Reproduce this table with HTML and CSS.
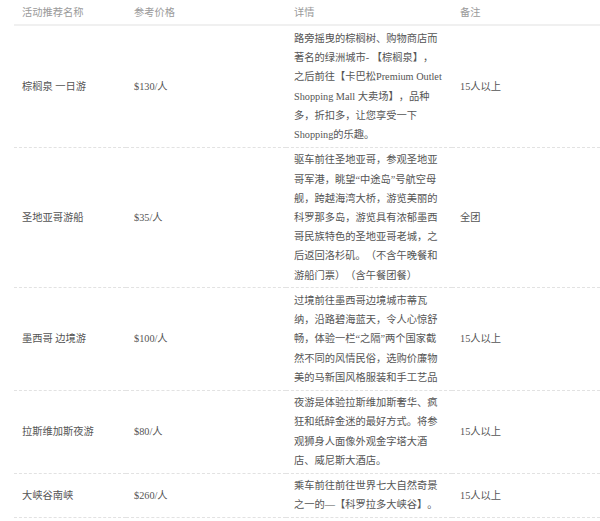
FILE: index.html
```html
<!DOCTYPE html>
<html lang="zh-CN">
<head>
<meta charset="utf-8">
<title>活动推荐</title>
<link rel="stylesheet" href="styles.css">
</head>
<body>
<table class="trips">
  <colgroup>
    <col class="col-name">
    <col class="col-price">
    <col class="col-detail">
    <col class="col-note">
  </colgroup>
  <thead>
    <tr>
      <th>活动推荐名称</th>
      <th>参考价格</th>
      <th>详情</th>
      <th>备注</th>
    </tr>
  </thead>
  <tbody>
    <tr>
      <td>棕榈泉 一日游</td>
      <td>$130/人</td>
      <td class="detail">路旁摇曳的棕榈树、购物商店而著名的绿洲城市- 【棕榈泉】，之后前往【卡巴松Premium Outlet Shopping Mall 大卖场】，品种多，折扣多，让您享受一下Shopping的乐趣。</td>
      <td>15人以上</td>
    </tr>
    <tr>
      <td>圣地亚哥游船</td>
      <td>$35/人</td>
      <td class="detail">驱车前往圣地亚哥，参观圣地亚哥军港，眺望“中途岛”号航空母舰，跨越海湾大桥，游览美丽的科罗那多岛，游览具有浓郁墨西哥民族特色的圣地亚哥老城，之后返回洛杉矶。（不含午晚餐和游船门票）（含午餐团餐）</td>
      <td>全团</td>
    </tr>
    <tr>
      <td>墨西哥 边境游</td>
      <td>$100/人</td>
      <td class="detail">过境前往墨西哥边境城市蒂瓦纳，沿路碧海蓝天，令人心惊舒畅，体验一栏“之隔”两个国家截然不同的风情民俗，选购价廉物美的马新国风格服装和手工艺品</td>
      <td>15人以上</td>
    </tr>
    <tr>
      <td>拉斯维加斯夜游</td>
      <td>$80/人</td>
      <td class="detail">夜游是体验拉斯维加斯奢华、疯狂和纸醉金迷的最好方式。将参观狮身人面像外观金字塔大酒店、威尼斯大酒店。</td>
      <td>15人以上</td>
    </tr>
    <tr>
      <td>大峡谷南峡</td>
      <td>$260/人</td>
      <td class="detail">乘车前往前往世界七大自然奇景之一的—【科罗拉多大峡谷】。</td>
      <td>15人以上</td>
    </tr>
  </tbody>
</table>
</body>
</html>
```

FILE: styles.css
```css
html, body {
  margin: 0;
  padding: 0;
  background: #ffffff;
}

body {
  font-family: "Liberation Serif", "Noto Sans CJK SC", serif;
  font-size: 10.25px;
  line-height: 19.2px;
  color: #555555;
  text-spacing-trim: space-all;
}

.trips {
  margin-left: 14px;
  width: 586px;
  border-collapse: collapse;
  table-layout: fixed;
}

.col-name { width: 112px; }
.col-price { width: 160px; }
.col-detail { width: 166px; }
.col-note { width: 148px; }

.trips th,
.trips td {
  padding: 2.6px 8px;
  text-align: left;
  vertical-align: middle;
  font-weight: normal;
}

.trips th {
  color: #9a9a9a;
  border-bottom: 2px solid #f0f0f0;
}

.trips td {
  border-bottom: 1px dashed #e2e2e2;
}

.trips td.detail {
  padding-right: 9.5px;
}
```
